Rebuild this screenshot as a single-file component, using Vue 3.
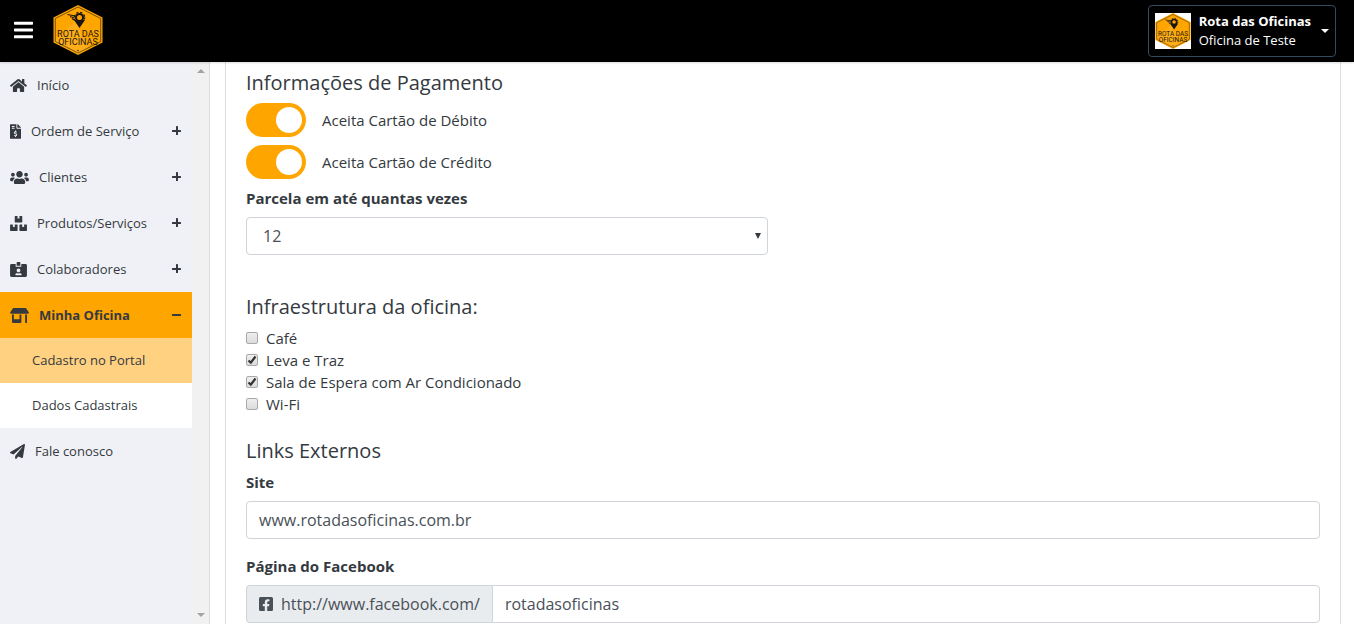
<script setup>
import { h, ref } from 'vue'

const ink = '#1b1710'
const logoLine = (y, text) => h('text', {
  x: 25, y, fill: ink, 'text-anchor': 'middle', 'font-family': 'Roboto, sans-serif', 'font-size': 9
}, text)

const RotaLogo = () => h('svg', { viewBox: '0 0 50 50', overflow: 'visible' }, [
  h('path', { d: 'M25 0L49.5 12.5V37.5L25 50L.5 37.5V12.5Z', fill: '#ffa500' }),
  h('path', { d: 'M22 16L1 37L25 49.500L36 43Z', fill: '#fff', opacity: 0.1 }),
  h('path', { d: 'M25 2L47.700 13.500V36.500L25 48L2.300 36.500V13.500Z', fill: 'none', stroke: '#3c2c08', 'stroke-width': 0.7 }),
  h('path', { d: 'M26.500 23L21 15H32Z', fill: ink }),
  h('circle', { cx: 26.5, cy: 12.5, r: 4.6, fill: ink }),
  h('circle', { cx: 26.5, cy: 12.5, r: 5.2, fill: 'none', stroke: ink, 'stroke-width': 1.2, 'stroke-dasharray': '2.2 1.9' }),
  h('circle', { cx: 26.5, cy: 12.5, r: 2.5, fill: '#ffa500' }),
  h('path', { d: 'M14.500 9.500L22 11M17 11.500L21.500 13M19 13.500L21 15', stroke: ink, 'stroke-width': 1.1 }),
  logoLine(32, 'ROTA DAS'),
  logoLine(40, 'OFICINAS'),
  h('circle', { cx: 25, cy: 45.5, r: 0.8, fill: '#3c2c08' })
])

const menu = [
  {
    label: 'Início', w: 576, cls: 'w17',
    d: 'M280.37 148.26L96 300.11V464a16 16 0 0 0 16 16l112.06-.29a16 16 0 0 0 15.92-16V368a16 16 0 0 1 16-16h64a16 16 0 0 1 16 16v95.64a16 16 0 0 0 16 16.05L464 480a16 16 0 0 0 16-16V300L295.67 148.26a12.19 12.19 0 0 0-15.3 0zM571.6 251.47L488 182.56V44.05a12 12 0 0 0-12-12h-56a12 12 0 0 0-12 12v72.61L318.47 43a48 48 0 0 0-61 0L4.34 251.47a12 12 0 0 0-1.6 16.9l25.5 31A12 12 0 0 0 45.15 301l235.22-193.74a12.19 12.19 0 0 1 15.3 0L530.9 301a12 12 0 0 0 16.9-1.6l25.5-31a12 12 0 0 0-1.7-16.93z'
  },
  {
    label: 'Ordem de Serviço', w: 384, cls: 'w11', more: true,
    d: 'M377 105L279.1 7c-4.5-4.5-10.6-7-17-7H256v128h128v-6.1c0-6.3-2.5-12.4-7-16.9zm-153 31V0H24C10.7 0 0 10.7 0 24v464c0 13.3 10.7 24 24 24h336c13.3 0 24-10.7 24-24V160H248c-13.2 0-24-10.8-24-24zM64 72c0-4.42 3.58-8 8-8h80c4.42 0 8 3.58 8 8v16c0 4.42-3.58 8-8 8H72c-4.42 0-8-3.58-8-8V72zm0 80v-16c0-4.42 3.58-8 8-8h80c4.42 0 8 3.58 8 8v16c0 4.42-3.58 8-8 8H72c-4.42 0-8-3.58-8-8zm144 263.88V440c0 4.42-3.58 8-8 8h-16c-4.42 0-8-3.58-8-8v-24.29c-11.29-.58-22.27-4.52-31.37-11.35-3.9-2.93-4.1-8.77-.57-12.14l11.75-11.21c2.77-2.64 6.89-2.76 10.13-.73 3.87 2.42 8.26 3.72 12.82 3.72h28.11c6.5 0 11.8-5.92 11.8-13.19 0-5.95-3.61-11.19-8.77-12.73l-45-13.5c-18.59-5.58-31.58-23.42-31.58-43.39 0-24.52 19.05-44.44 42.67-45.07V232c0-4.42 3.58-8 8-8h16c4.42 0 8 3.58 8 8v24.29c11.29.58 22.27 4.51 31.37 11.35 3.9 2.93 4.1 8.77.57 12.14l-11.75 11.21c-2.77 2.64-6.89 2.76-10.13.73-3.87-2.43-8.26-3.72-12.82-3.72h-28.11c-6.5 0-11.8 5.92-11.8 13.19 0 5.95 3.61 11.19 8.77 12.73l45 13.5c18.59 5.58 31.58 23.42 31.58 43.39 0 24.53-19.05 44.44-42.67 45.07z'
  },
  {
    label: 'Clientes', w: 640, cls: 'w19', more: true,
    d: 'M96 224c35.3 0 64-28.7 64-64s-28.7-64-64-64-64 28.7-64 64 28.7 64 64 64zm448 0c35.3 0 64-28.7 64-64s-28.7-64-64-64-64 28.7-64 64 28.7 64 64 64zm32 32h-64c-17.6 0-33.5 7.1-45.1 18.6 40.3 22.1 68.9 62 75.1 109.4h66c17.7 0 32-14.3 32-32v-32c0-35.3-28.7-64-64-64zm-256 0c61.9 0 112-50.1 112-112S381.9 32 320 32 208 82.1 208 144s50.1 112 112 112zm76.8 32h-8.3c-20.8 10-43.9 16-68.5 16s-47.6-6-68.5-16h-8.3C179.6 288 128 339.6 128 403.2V432c0 26.5 21.5 48 48 48h288c26.5 0 48-21.5 48-48v-28.8c0-63.6-51.6-115.2-115.2-115.2zm-223.7-13.4C161.5 263.1 145.6 256 128 256H64c-35.3 0-64 28.7-64 64v32c0 17.7 14.3 32 32 32h65.9c6.3-47.4 34.9-87.3 75.2-109.4z'
  },
  {
    label: 'Produtos/Serviços', w: 576, cls: 'w17', more: true,
    d: 'M560 288h-80v96l-32-21.3-32 21.3v-96h-80c-8.8 0-16 7.2-16 16v192c0 8.8 7.2 16 16 16h224c8.8 0 16-7.2 16-16V304c0-8.8-7.2-16-16-16zm-384-64h224c8.8 0 16-7.2 16-16V16c0-8.8-7.2-16-16-16h-80v96l-32-21.3L256 96V0h-80c-8.8 0-16 7.2-16 16v192c0 8.8 7.2 16 16 16zm64 64h-80v96l-32-21.3L96 384v-96H16c-8.8 0-16 7.2-16 16v192c0 8.8 7.2 16 16 16h224c8.8 0 16-7.2 16-16V304c0-8.8-7.2-16-16-16z'
  },
  {
    label: 'Colaboradores', w: 576, cls: 'w17', more: true,
    d: 'M528 64H384v96H192V64H48C21.5 64 0 85.5 0 112v352c0 26.5 21.5 48 48 48h480c26.5 0 48-21.5 48-48V112c0-26.5-21.5-48-48-48zM288 224c35.3 0 64 28.7 64 64s-28.7 64-64 64-64-28.7-64-64 28.7-64 64-64zm93.3 224H194.7c-10.4 0-18.8-10-15.6-19.8 8.3-25.6 32.4-44.2 60.9-44.2h8.2c12.3 5.1 25.7 8 39.8 8s27.6-2.9 39.8-8h8.2c28.4 0 52.5 18.5 60.9 44.2 3.2 9.9-5.2 19.8-15.6 19.8zM352 32c0-17.7-14.3-32-32-32h-64c-17.7 0-32 14.3-32 32v96h128V32z'
  },
  {
    label: 'Minha Oficina', w: 640, cls: 'w19', more: true, open: true,
    children: [
      { label: 'Cadastro no Portal', current: true },
      { label: 'Dados Cadastrais' }
    ],
    d: 'M320 384H128V224H64v256c0 17.7 14.3 32 32 32h256c17.7 0 32-14.3 32-32V224h-64v160zm314.6-241.8l-85.3-128c-6-8.9-16-14.2-26.7-14.2H117.4c-10.7 0-20.7 5.3-26.6 14.2l-85.3 128c-14.2 21.3 1 49.8 26.6 49.8H608c25.5 0 40.7-28.5 26.6-49.8zM512 496c0 8.8 7.2 16 16 16h32c8.8 0 16-7.2 16-16V224h-64v272z'
  },
  {
    label: 'Fale conosco', w: 512, cls: 'w15',
    d: 'M476 3.2L12.5 270.6c-18.1 10.4-15.8 35.6 2.2 43.2L121 358.4l287.3-253.2c5.5-4.9 13.3 2.6 8.6 8.3L176 407v80.5c0 23.6 28.5 32.9 42.5 15.8L282 426l124.6 52.2c14.2 6 30.4-2.9 33-18.2l72-432C515 7.8 493.3-6.8 476 3.2z'
  }
]

const cards = ref([
  { id: 'debito', label: 'Aceita Cartão de Débito', on: true },
  { id: 'credito', label: 'Aceita Cartão de Crédito', on: true }
])
const amenities = ref([
  { id: 'cafe', label: 'Café', on: false },
  { id: 'leva', label: 'Leva e Traz', on: true },
  { id: 'espera', label: 'Sala de Espera com Ar Condicionado', on: true },
  { id: 'wifi', label: 'Wi-Fi', on: false }
])
const installments = ref(12)
const site = ref('www.rotadasoficinas.com.br')
const facebook = ref('rotadasoficinas')
</script>

<template>
  <div class="page">
    <header class="topbar">
      <button class="burger" type="button" aria-label="Menu">
        <svg viewBox="0 0 448 512" fill="currentColor"><path d="M16 132h416c8.800 0 16-7.200 16-16V76c0-8.800-7.200-16-16-16H16C7.200 60 0 67.200 0 76v40c0 8.800 7.200 16 16 16zm0 160h416c8.800 0 16-7.200 16-16v-40c0-8.800-7.200-16-16-16H16c-8.800 0-16 7.200-16 16v40c0 8.800 7.200 16 16 16zm0 160h416c8.800 0 16-7.200 16-16v-40c0-8.800-7.200-16-16-16H16c-8.800 0-16 7.200-16 16v40c0 8.800 7.200 16 16 16z" /></svg>
      </button>
      <a class="brand" href="#" aria-label="Rota das Oficinas"><RotaLogo /></a>
      <button class="account" type="button">
        <span class="avatar"><RotaLogo /></span>
        <span class="who"><strong>Rota das Oficinas</strong><span>Oficina de Teste</span></span>
        <span class="caret"></span>
      </button>
    </header>

    <div class="body">
      <aside class="sidebar">
        <nav>
          <template v-for="item in menu" :key="item.label">
            <a href="#" class="item" :class="{ active: item.open }">
              <svg class="icon" :class="item.cls" :viewBox="`0 0 ${item.w} 512`" fill="currentColor"><path :d="item.d" /></svg>
              <span>{{ item.label }}</span>
              <svg v-if="item.more" class="sign" viewBox="0 0 9 11" fill="currentColor">
                <rect x="0" y="4" width="9" height="2" rx=".5" />
                <rect v-if="!item.open" x="4" y="0" width="2" height="9" rx=".5" />
              </svg>
            </a>
            <a v-for="sub in item.children" :key="sub.label" href="#" class="sub" :class="{ current: sub.current }">{{ sub.label }}</a>
          </template>
        </nav>
        <div class="scroll" aria-hidden="true"><i class="up"></i><i class="down"></i></div>
      </aside>

      <main>
        <form class="card">
          <section>
            <h5>Informações de Pagamento</h5>
            <label v-for="c in cards" :key="c.id" class="switch" :for="c.id">
              <input :id="c.id" v-model="c.on" type="checkbox">
              <span>{{ c.label }}</span>
            </label>
            <div class="field half">
              <label for="parcelas">Parcela em até quantas vezes</label>
              <div class="select">
                <select id="parcelas" v-model="installments" class="control">
                  <option v-for="n in 12" :key="n" :value="n">{{ n }}</option>
                </select>
                <svg viewBox="0 0 6 6" fill="#343a40"><path d="M0 0H6L3 6Z" /></svg>
              </div>
            </div>
          </section>

          <section class="infra">
            <h5>Infraestrutura da oficina:</h5>
            <label v-for="a in amenities" :key="a.id" class="check" :for="a.id">
              <span class="box">
                <input :id="a.id" v-model="a.on" type="checkbox">
                <svg v-if="a.on" viewBox="0 0 12 12" fill="none" stroke="#333" stroke-width="2.200"><path d="M2.500 6.500L4.800 8.700L9.500 2.500" /></svg>
              </span>
              <span>{{ a.label }}</span>
            </label>
          </section>

          <section class="links">
            <h5>Links Externos</h5>
            <div class="field">
              <label for="site">Site</label>
              <input id="site" v-model="site" class="control" type="text">
            </div>
            <div class="field">
              <label for="facebook">Página do Facebook</label>
              <div class="group">
                <span class="prefix">
                  <svg viewBox="0 0 448 512" fill="currentColor"><path d="M400 32H48A48 48 0 0 0 0 80v352a48 48 0 0 0 48 48h137.250V327.690h-63V256h63v-54.640c0-62.150 37-96.480 93.670-96.480 27.140 0 55.520 4.840 55.520 4.840v61h-31.270c-30.810 0-40.420 19.120-40.420 38.730V256h68.780l-11 71.690h-57.780V480H400a48 48 0 0 0 48-48V80a48 48 0 0 0-48-48z" /></svg>
                  http://www.facebook.com/
                </span>
                <input id="facebook" v-model="facebook" class="control" type="text">
              </div>
            </div>
          </section>
        </form>
      </main>
    </div>
  </div>
</template>

<style>
body { margin: 0; overflow: hidden; }
</style>

<style scoped>
* { box-sizing: border-box; }
.page {
  display: flex; flex-direction: column; height: 100vh; overflow: hidden;
  font-family: "Open Sans", sans-serif; font-size: 15px; line-height: 22px;
  color: #343a40; background: #fff;
}
a { color: inherit; text-decoration: none; }
button, input, select { font: inherit; color: inherit; margin: 0; }

.topbar {
  position: relative; display: flex; align-items: flex-start; flex: none; height: 62px;
  padding: 5px 18px 0 14px; background: #000; color: #fff;
  box-shadow: 0 1px 2px rgba(0, 0, 0, .15);
}
.burger { display: flex; align-items: center; height: 50px; padding: 0; border: 0; background: none; }
.burger svg { width: 19px; height: 22px; }
.brand { display: flex; margin-left: 20px; }
.brand svg { width: 50px; height: 50px; }
.account {
  display: flex; align-items: center; height: 52px; margin-left: auto; padding: 0 6px;
  border: 1px solid #34495e; border-radius: 4px; background: #000; text-align: left;
}
.avatar { display: flex; background: #fff; }
.avatar svg { width: 36px; height: 36px; }
.who { display: flex; flex-direction: column; margin: 0 10px 0 8px; font-size: 13px; line-height: 19px; }
.caret { border: 4px solid transparent; border-top-color: #fff; border-bottom: 0; }

.body { display: flex; flex: 1; min-height: 0; }
.sidebar { display: flex; flex: none; width: 210px; border-right: 1px solid #ddd; background: #f0f1f6; font-size: 13px; }
nav { flex: 1; overflow: hidden; }
.item { display: flex; align-items: center; gap: 10px; height: 46px; padding: 0 11px 0 10px; }
.item.active { background: #ffa500; font-weight: 700; }
.icon { flex: none; height: 15px; }
.w11 { width: 11px; }
.w15 { width: 15px; }
.w17 { width: 17px; }
.w19 { width: 19px; }
.sign { width: 9px; height: 11px; margin-left: auto; }
.sub { height: 45px; padding-left: 32px; line-height: 44px; background: #fff; display: block; }
.sub.current { background: #ffd180; }
.scroll {
  display: flex; flex-direction: column; justify-content: space-between; align-items: center;
  width: 17px; padding: 7px 0; background: #f1f1f1;
}
.up, .down { border: 4px solid transparent; }
.up { border-bottom-color: #a3a3a3; border-top: 0; }
.down { border-top-color: #a3a3a3; border-bottom: 0; }

main { flex: 1; min-width: 0; padding: 0 13px 0 15px; overflow: hidden; }
.card { padding: 9px 20px 20px; border: solid #ddd; border-width: 0 1px; }
h5 { margin: 0 0 8px; font-size: 20px; line-height: 24px; font-weight: 400; }
.infra { margin-top: 40px; }
.links { margin-top: 24px; }
.switch { display: flex; align-items: center; gap: 16px; height: 34px; margin-bottom: 8px; }
.switch input {
  appearance: none; display: flex; align-items: center; width: 60px; height: 34px;
  padding: 0 4px; border-radius: 17px; background: #ccc;
}
.switch input::before { content: ""; width: 26px; height: 26px; border-radius: 50%; background: #fff; }
.switch input:checked { justify-content: flex-end; background: #ffa500; }
.field > label { display: block; margin-bottom: 8px; font-weight: 700; }
.field + .field { margin-top: 16px; }
.half { width: calc(50% - 15px); }
.control {
  display: block; width: 100%; height: 38px; padding: 0 12px;
  border: 1px solid #ced4da; border-radius: 4px; background: #fff;
  font-size: 16px; color: #495057;
}
.select { position: relative; }
.select select { appearance: none; padding: 0 16px; }
.select svg { position: absolute; right: 7px; top: 16px; width: 6px; height: 6px; pointer-events: none; }
.check { display: flex; align-items: center; gap: 8px; width: max-content; }
.box { position: relative; display: flex; }
.box input {
  appearance: none; width: 12px; height: 12px; border: 1px solid #a9a9a9; border-radius: 2px;
  background: linear-gradient(#eee, #dcdcdc);
}
.box svg { position: absolute; inset: 0; pointer-events: none; }
.group { display: flex; }
.prefix {
  display: flex; align-items: center; gap: 8px; flex: none; padding: 0 12px;
  border: 1px solid #ced4da; border-right: 0; border-radius: 4px 0 0 4px;
  background: #e9ecef; color: #495057; font-size: 16px;
}
.prefix svg { width: 14px; height: 16px; }
.group .control { flex: 1; min-width: 0; border-radius: 0 4px 4px 0; }
</style>
